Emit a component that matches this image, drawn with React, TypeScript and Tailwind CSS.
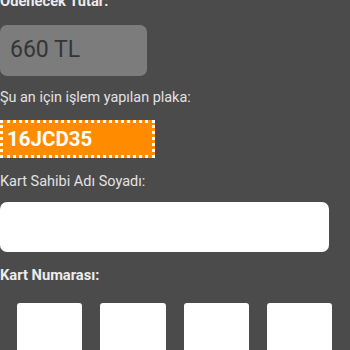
import React from "react"

const cardInputs = [0, 1, 2, 3]

export default function App() {
	return (
		<div
			className="w-[350px] h-[350px] overflow-hidden bg-[#4b4b4b]"
			style={{ fontFamily: "Roboto, 'Liberation Sans', sans-serif" }}
		>
			<div className="-mt-[9px] text-[14.7px] leading-[20px] font-bold text-[#ececec]">Ödenecek Tutar:</div>

			<div className="mt-[14px] h-[51px] w-[147px] rounded-[7px] bg-[#7c7c7c] pl-[10px] flex items-center text-[23px] text-[#353535]">
				660 TL
			</div>

			<div className="mt-[12px] text-[14.4px] leading-[20px] text-[#e2e2e2]">Şu an için işlem yapılan plaka:</div>

			<div className="mt-[12px] h-[38px] w-[155px] bg-[#ff8c00] border-[3px] border-dotted border-white pl-[4px] flex items-center text-[20.5px] font-bold text-white">
				16JCD35
			</div>

			<div className="mt-[14px] text-[14.5px] leading-[20px] text-[#e2e2e2]">Kart Sahibi Adı Soyadı:</div>

			<div className="mt-[10px] h-[50px] w-[329px] rounded-[7px] bg-white"></div>

			<div className="mt-[13px] text-[14.7px] leading-[20px] font-bold text-[#ececec]">Kart Numarası:</div>

			<div className="mt-[18px] ml-[17px] w-[315px] grid grid-cols-4 gap-[18px]">
				{cardInputs.map((i) => (
					<div key={i} className="h-[60px] rounded-[3px] bg-white"></div>
				))}
			</div>
		</div>
	)
}
